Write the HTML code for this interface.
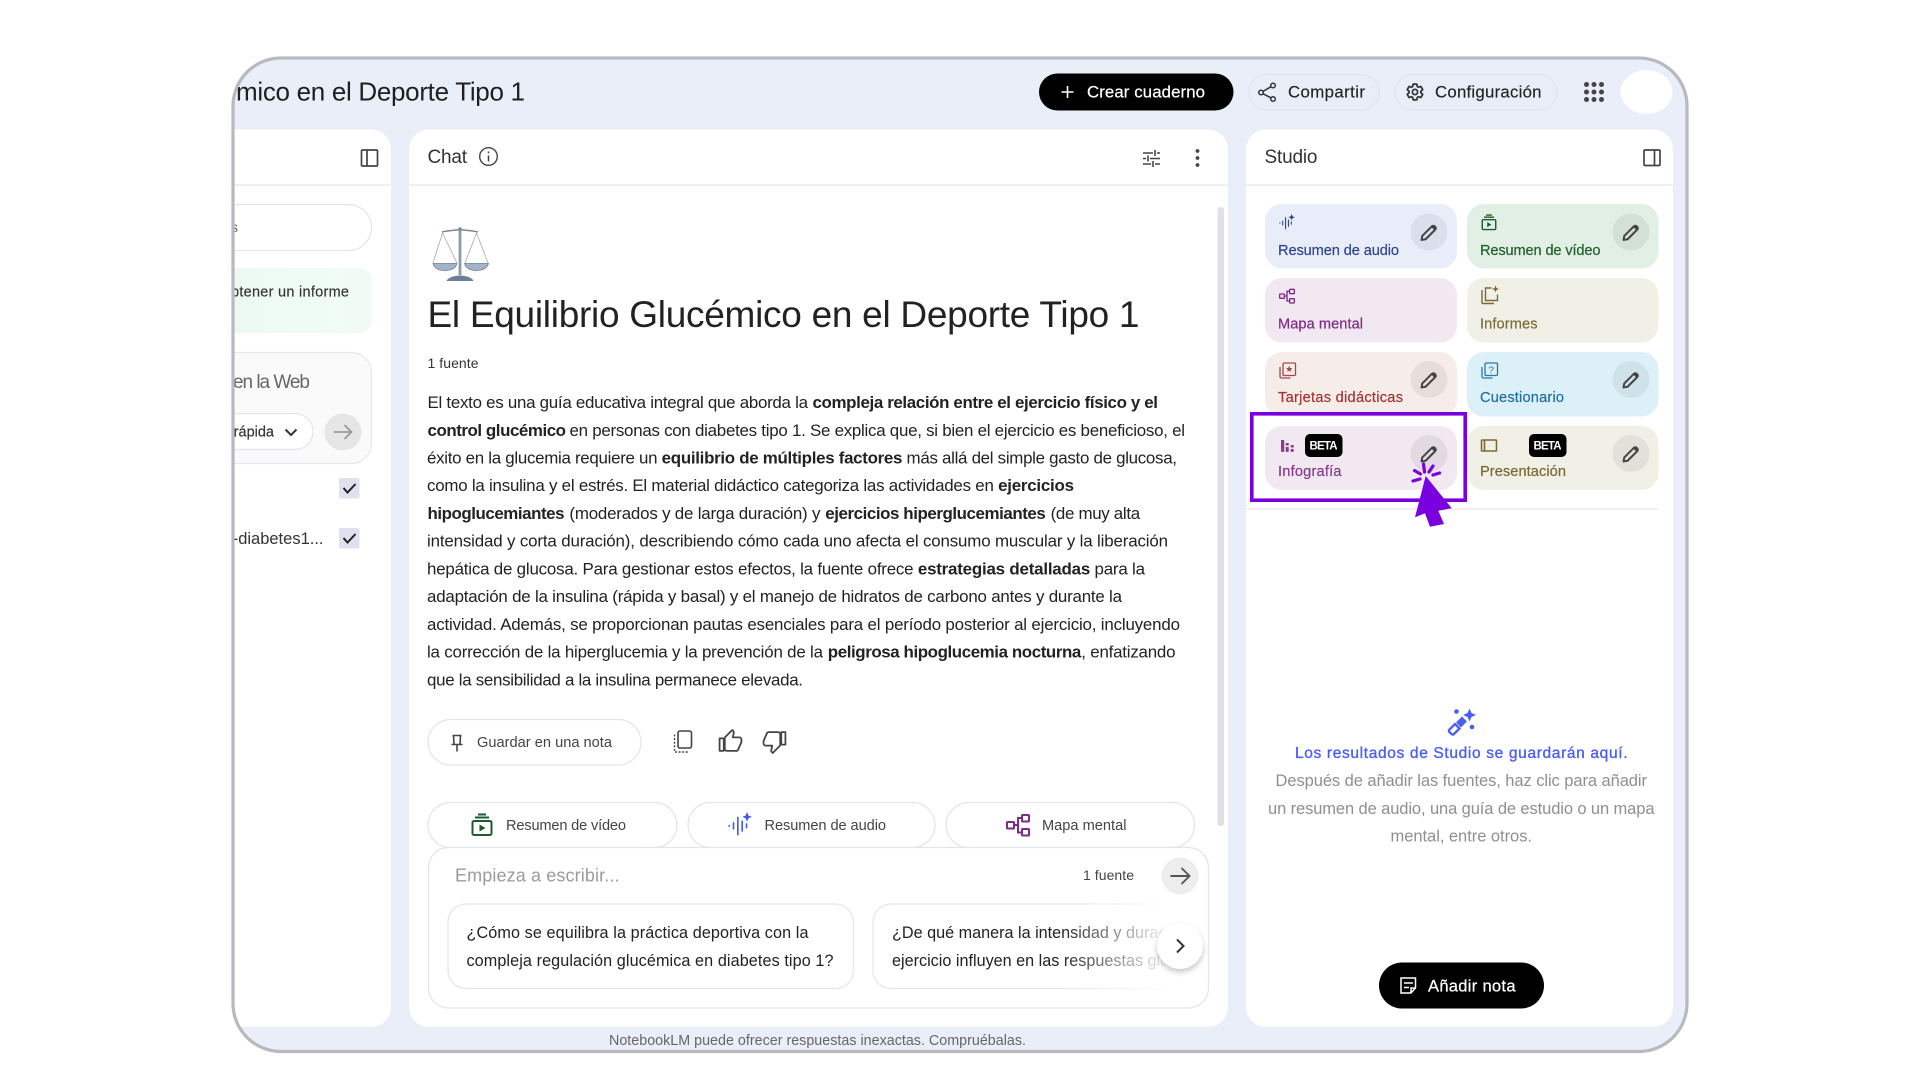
<!DOCTYPE html>
<html lang="es"><head><meta charset="utf-8"><title>NotebookLM</title>
<style>
html,body{margin:0;padding:0;background:#fff;width:1920px;height:1080px;overflow:hidden}
svg{display:block;position:absolute;left:0;top:0;filter:blur(.35px)}
text{font-family:"Liberation Sans",sans-serif;fill:currentColor;color:#1f1f1f;white-space:pre}
.m{stroke:currentColor;stroke-width:.3px}
.b{font-size:16.9px;color:#222}
.b tspan,.bb{font-weight:bold}
.c{font-size:14.6px}
</style></head><body>
<svg width="1920" height="1080" viewBox="0 0 1920 1080" xmlns="http://www.w3.org/2000/svg">
<defs>
<clipPath id="f"><rect x="233" y="58" width="1454" height="993.5" rx="48"/></clipPath>
<clipPath id="inp"><rect x="429" y="848" width="778" height="159" rx="20"/></clipPath>
<linearGradient id="fade"><stop offset="0" stop-color="#fff" stop-opacity="0"/><stop offset=".75" stop-color="#fff"/></linearGradient>
<linearGradient id="gr"><stop offset="0" stop-color="#e9f9ef"/><stop offset=".6" stop-color="#effcf4"/><stop offset="1" stop-color="#f0fbf6"/></linearGradient>
<symbol id="pen" viewBox="0 0 24 24" overflow="visible"><path d="M3.500 20.500l.8-4.600L15.300 4.900c.9-.9 2.300-.9 3.200 0l.6.6c.9.900.9 2.300 0 3.200L8.100 19.700z" fill="none" stroke="#444" stroke-width="2.300" stroke-linejoin="round"/><path d="M14.500 5.700l3-2.200 3 3-2.200 3z" fill="#444"/></symbol>
<symbol id="tup" viewBox="0 0 24 24"><path d="M9 21h9c.83 0 1.54-.5 1.840-1.220l3.020-7.050c.09-.23.14-.47.14-.73v-2c0-1.100-.9-2-2-2h-6.310l.95-4.570.03-.32c0-.41-.17-.79-.44-1.060L14.170 1 7.580 7.590C7.220 7.950 7 8.450 7 9v10c0 1.100.9 2 2 2zM2 9h4v12H2z" fill="none" stroke="#444" stroke-width="1.700" stroke-linejoin="round"/></symbol>
<symbol id="aud" viewBox="0 0 24 24"><g fill="none" stroke="currentColor" stroke-width="1.500" stroke-linecap="round"><path d="M2 12.500v.5M6 10v5.500M10 5v16M14 8.500v9M18 11v3.500"/></g><path d="M18.500 0l1.300 3.200L23 4.500l-3.200 1.300L18.500 9l-1.300-3.200L14 4.500l3.200-1.300z" fill="currentColor"/></symbol>
<symbol id="vid" viewBox="0 0 24 24"><g fill="none" stroke="currentColor" stroke-width="2"><rect x="2.500" y="8" width="19" height="14" rx="1.500"/><path d="M5 4.500h14M8 1.500h8"/></g><path d="M9.500 11.500l6 3.500-6 3.500z" fill="currentColor"/></symbol>
<symbol id="map" viewBox="0 0 24 24"><g fill="none" stroke="currentColor" stroke-width="2"><rect x="1" y="9" width="7" height="6.500" rx=".8"/><rect x="16" y="2" width="7" height="6.500" rx=".8"/><rect x="16" y="16" width="7" height="6.500" rx=".8"/><path d="M8 12h4M16 5h-4v14.500h4"/></g></symbol>
</defs>

<rect x="233" y="58" width="1454" height="993.500" rx="48" fill="#eaeef9"/>
<g clip-path="url(#f)">
<!-- header -->
<text x="236" y="100.500" font-size="26" textLength="289">mico en el Deporte Tipo 1</text>
<text x="236" y="100.500" font-size="26" text-anchor="end">El Equilibrio Glucé</text>

<!-- panels -->
<rect x="200" y="129.500" width="191" height="897.500" rx="20" fill="#fff"/>
<rect x="409" y="129.500" width="819" height="897.500" rx="20" fill="#fff"/>
<rect x="1246" y="129.500" width="427" height="897.500" rx="20" fill="#fff"/>
<path d="M233 185h158M409 185h819M1246 185h427" stroke="#e9ebf1" stroke-width="1.500"/>

<!-- left -->
<rect x="200" y="204.500" width="171.500" height="46" rx="23" fill="#fff" stroke="#e3e5ec" stroke-width="1.200"/>
<text x="238" y="232" font-size="14" text-anchor="end" style="color:#666">Buscar fuentes</text>
<rect x="200" y="268" width="172" height="65" rx="13" fill="url(#gr)"/>
<text x="231" y="296.500" font-size="14.500" textLength="118" class="m" style="color:#333;stroke-width:.15px">btener un informe</text>
<rect x="200" y="352.500" width="171.500" height="111" rx="20" fill="#fafafa" stroke="#e5e7ef" stroke-width="1.200"/>
<text x="233" y="388" font-size="19" textLength="77" style="color:#666">en la Web</text>
<rect x="190" y="413.500" width="123" height="36" rx="18" fill="#fff" stroke="#e3e5ec" stroke-width="1.200"/>
<text x="274" y="436.500" font-size="14.500" text-anchor="end" class="m" style="color:#333;stroke-width:.2px">Búsqueda rápida</text>
<path d="M285.500 429.500l5.500 5.500 5.500-5.500" fill="none" stroke="#333" stroke-width="2"/>
<circle cx="343" cy="432" r="18.500" fill="#e6e6e6"/>
<path d="M334 432h17.500M344.500 425l7 7-7 7" fill="none" stroke="#9a9a9a" stroke-width="1.800"/>
<rect x="339" y="478" width="20.500" height="20.500" rx="2" fill="#dfe2ee"/>
<path d="M343.500 488l4 4.500 8-8.500" fill="none" stroke="#222" stroke-width="2"/>
<rect x="339" y="528" width="20.500" height="20.500" rx="2" fill="#dfe2ee"/>
<path d="M343.500 538l4 4.500 8-8.500" fill="none" stroke="#222" stroke-width="2"/>
<text x="323.500" y="544" font-size="16.500" text-anchor="end" style="color:#333">ejercicio-diabetes1...</text>
<g fill="none" stroke="#444" stroke-width="1.700"><rect x="361.500" y="150" width="16" height="16" rx="1"/><path d="M367 150v16"/></g>

<!-- chat head -->
<text x="427.500" y="163" font-size="19" textLength="39.500" style="color:#333">Chat</text>
<circle cx="488.500" cy="156.500" r="8.800" fill="none" stroke="#444" stroke-width="1.400"/>
<path d="M488.500 155.500v6M488.500 151.500v1.800" stroke="#444" stroke-width="1.500"/>
<g stroke="#444" stroke-width="1.600" fill="none"><path d="M1143 153h10M1157 153h3M1155 150v6M1143 158.500h3M1150 158.500h10M1148 155.500v6M1143 164h8M1155 164h5M1153 161v6"/></g>
<g fill="#444"><circle cx="1197.500" cy="151" r="1.900"/><circle cx="1197.500" cy="158" r="1.900"/><circle cx="1197.500" cy="165" r="1.900"/></g>

<!-- scales emoji -->
<g fill="none">
<path d="M460 229v46" stroke="#8b9bad" stroke-width="2.800"/>
<path d="M442 232c6-1.500 12-1.500 18-2.500 6 1 12 1 18 2.500" stroke="#7c8794" stroke-width="1.500"/>
<path d="M442.500 233l-9.500 30M442.500 233l14.500 30M476.500 233l-11.500 30M476.500 233l11.500 30" stroke="#9a9ea4" stroke-width=".7"/>
<path d="M433 263.500h24c-1.500 5-6 7-12 7s-10.500-2-12-7zM464.500 263.500h24c-1.500 5-6 7-12 7s-10.500-2-12-7z" fill="#a3b4c6" stroke="#6a7b8f" stroke-width=".7"/>
<path d="M446.500 281c1-3 7-5.500 13.500-5.500s12.500 2.500 13.500 5.500z" fill="#6d7f94"/>
<circle cx="460" cy="229" r="1.800" fill="#7f8ea0"/>
</g>

<!-- chat content -->
<text x="427.500" y="327" font-size="37" textLength="712" style="color:#222">El Equilibrio Glucémico en el Deporte Tipo 1</text>
<text x="427.500" y="368" font-size="14" textLength="51" style="color:#333">1 fuente</text>
<text class="b" x="427.500" y="408" textLength="380.500">El texto es una guía educativa integral que aborda la</text>
<text class="b bb" x="812.500" y="408" textLength="345.500">compleja relación entre el ejercicio físico y el</text>
<text class="b bb" x="427.500" y="435.800" textLength="138.500">control glucémico</text>
<text class="b" x="569.500" y="435.800" textLength="615.500">en personas con diabetes tipo 1. Se explica que, si bien el ejercicio es beneficioso, el</text>
<text class="b" x="427" y="463.500" textLength="750">éxito en la glucemia requiere un <tspan>equilibrio de múltiples factores</tspan> más allá del simple gasto de glucosa,</text>
<text class="b" x="427" y="491.200" textLength="647">como la insulina y el estrés. El material didáctico categoriza las actividades en <tspan>ejercicios</tspan></text>
<text class="b bb" x="427.500" y="519" textLength="137">hipoglucemiantes</text>
<text class="b" x="569.400" y="519" textLength="251">(moderados y de larga duración) y</text>
<text class="b bb" x="825.300" y="519" textLength="220.500">ejercicios hiperglucemiantes</text>
<text class="b" x="1050.600" y="519" textLength="89.500">(de muy alta</text>
<text class="b" x="427" y="546.700" textLength="741">intensidad y corta duración), describiendo cómo cada uno afecta el consumo muscular y la liberación</text>
<text class="b" x="427" y="574.500" textLength="718">hepática de glucosa. Para gestionar estos efectos, la fuente ofrece <tspan>estrategias detalladas</tspan> para la</text>
<text class="b" x="427" y="602.200" textLength="695">adaptación de la insulina (rápida y basal) y el manejo de hidratos de carbono antes y durante la</text>
<text class="b" x="427" y="630" textLength="753">actividad. Además, se proporcionan pautas esenciales para el período posterior al ejercicio, incluyendo</text>
<text class="b" x="427" y="657.700" textLength="396">la corrección de la hiperglucemia y la prevención de la</text>
<text class="b bb" x="827.800" y="657.700" textLength="253.500">peligrosa hipoglucemia nocturna</text>
<text class="b" x="1081.300" y="657.700" textLength="94.200">, enfatizando</text>
<text class="b" x="427" y="685.500" textLength="376">que la sensibilidad a la insulina permanece elevada.</text>

<!-- scrollbar -->
<rect x="1217.500" y="207" width="6.500" height="619" rx="3.200" fill="#e0e1e6"/>

<!-- actions -->
<rect x="428" y="719.500" width="213" height="45.500" rx="22.700" fill="#fff" stroke="#e3e5ec" stroke-width="1.200"/>
<path d="M452.500 735.500h9M453.500 735.500l.5 9h6l.5-9M451.500 744.500h11M457 744.500v7" fill="none" stroke="#444" stroke-width="1.600"/>
<text x="477" y="747" class="c" textLength="135" style="color:#444">Guardar en una nota</text>
<rect x="678" y="731" width="13.500" height="17" rx="2" fill="none" stroke="#444" stroke-width="1.600"/>
<path d="M674.500 734.500v17.500h14" fill="none" stroke="#444" stroke-width="1.400" stroke-dasharray="2 1.600"/>
<use href="#tup" x="717.500" y="729" width="25" height="25"/>
<use href="#tup" x="0" y="0" width="25" height="25" transform="translate(787.500 754) rotate(180)"/>

<!-- chips -->
<g fill="#fff" stroke="#e3e5ec" stroke-width="1.200">
<rect x="428" y="802.500" width="249" height="45" rx="22.500"/>
<rect x="688" y="802.500" width="247" height="45" rx="22.500"/>
<rect x="946" y="802.500" width="248.500" height="45" rx="22.500"/>
</g>
<use href="#vid" x="470" y="813" width="24" height="24" style="color:#1e5b2e"/>
<text x="506" y="830" class="c" textLength="120" style="color:#444">Resumen de vídeo</text>
<use href="#aud" x="727" y="812" width="26" height="26" style="color:#3f5bf0"/>
<text x="764.500" y="830" class="c" textLength="121.500" style="color:#444">Resumen de audio</text>
<use href="#map" x="1006" y="813" width="24" height="24" style="color:#7f2a85"/>
<text x="1042" y="830" class="c" textLength="84.500" style="color:#444">Mapa mental</text>

<!-- input -->
<rect x="428.500" y="847.500" width="780" height="160.500" rx="20" fill="#fff" stroke="#e3e5ec" stroke-width="1.200"/>
<text x="455" y="881.500" font-size="18" textLength="164.500" style="color:#9b9b9b">Empieza a escribir...</text>
<text x="1083" y="880" font-size="14" textLength="51" style="color:#444">1 fuente</text>
<circle cx="1180" cy="876" r="18.500" fill="#ededed"/>
<path d="M1170.500 876h18.500M1181.500 868l8 8-8 8" fill="none" stroke="#555" stroke-width="1.900"/>
<rect x="448" y="904" width="405.500" height="84.500" rx="18" fill="#fff" stroke="#e3e5ec" stroke-width="1.200"/>
<text x="466.500" y="938" font-size="16.200" textLength="342" style="color:#222">¿Cómo se equilibra la práctica deportiva con la</text>
<text x="466.500" y="966" font-size="16.200" textLength="367" style="color:#222">compleja regulación glucémica en diabetes tipo 1?</text>
<g clip-path="url(#inp)">
<rect x="873" y="904" width="420" height="84.500" rx="18" fill="#fff" stroke="#e3e5ec" stroke-width="1.200"/>
<text x="892" y="938" font-size="16.200" style="color:#222">¿De qué manera la intensidad y duración del</text>
<text x="892" y="966" font-size="16.200" style="color:#222">ejercicio influyen en las respuestas glucémicas</text>
<rect x="1060" y="900" width="150" height="92" fill="url(#fade)"/>
</g>
<circle cx="1180" cy="949" r="23" fill="#000" opacity=".22" style="filter:blur(3px)"/>
<circle cx="1180" cy="946" r="23" fill="#fff"/>
<path d="M1177 939.500l6.500 6.500-6.500 6.500" fill="none" stroke="#333" stroke-width="2"/>

<text x="609" y="1045" font-size="14.300" textLength="417" style="color:#666">NotebookLM puede ofrecer respuestas inexactas. Compruébalas.</text>

<!-- top buttons -->
<rect x="1039" y="73.500" width="194.500" height="37" rx="18.500" fill="#000"/>
<path d="M1061.500 92h12M1067.500 86v12" stroke="#fff" stroke-width="1.600"/>
<text x="1087" y="97.500" font-size="16.800" class="m" textLength="118" style="color:#fff;stroke-width:.2px">Crear cuaderno</text>
<rect x="1249" y="74.500" width="130.500" height="35.500" rx="17.700" fill="#e9edf8" stroke="#dfe3ee" stroke-width="1.200"/>
<g fill="none" stroke="#333" stroke-width="1.500"><circle cx="1273" cy="85.500" r="2.300"/><circle cx="1261" cy="92.500" r="2.300"/><circle cx="1273" cy="99" r="2.300"/><path d="M1271 86.700l-8 4.700M1263 93.700l8 4.200"/></g>
<text x="1288" y="97.500" font-size="16.800" class="m" textLength="77" style="color:#222;stroke-width:.15px">Compartir</text>
<rect x="1395" y="74.500" width="162" height="35.500" rx="17.700" fill="#e9edf8" stroke="#dfe3ee" stroke-width="1.200"/>
<g transform="translate(1405.500 82.500) scale(.79)"><path d="M19.430 12.980c.04-.32.07-.64.07-.98s-.03-.66-.07-.98l2.110-1.650c.19-.15.24-.42.12-.64l-2-3.460c-.12-.22-.39-.3-.61-.22l-2.490 1c-.52-.4-1.080-.73-1.690-.98l-.38-2.650C14.460 2.180 14.250 2 14 2h-4c-.25 0-.46.18-.49.42l-.38 2.650c-.61.25-1.170.59-1.690.98l-2.490-1c-.23-.09-.49 0-.61.22l-2 3.460c-.13.22-.07.49.12.64l2.110 1.650c-.04.32-.07.65-.07.98s.03.66.07.98l-2.110 1.650c-.19.15-.24.42-.12.64l2 3.460c.12.22.39.3.61.22l2.490-1c.52.4 1.080.73 1.690.98l.38 2.650c.03.24.24.42.49.42h4c.25 0 .46-.18.49-.42l.38-2.650c.61-.25 1.170-.59 1.690-.98l2.490 1c.23.09.49 0 .61-.22l2-3.460c.12-.22.07-.49-.12-.64l-2.110-1.650z" fill="none" stroke="#333" stroke-width="2.200"/><circle cx="12" cy="12" r="3.300" fill="none" stroke="#333" stroke-width="2.200"/></g>
<text x="1435" y="97.500" font-size="16.800" class="m" textLength="106.500" style="color:#222;stroke-width:.15px">Configuración</text>
<g fill="#444"><circle cx="1586.500" cy="84.500" r="2.500"/><circle cx="1594" cy="84.500" r="2.500"/><circle cx="1601.500" cy="84.500" r="2.500"/><circle cx="1586.500" cy="92" r="2.500"/><circle cx="1594" cy="92" r="2.500"/><circle cx="1601.500" cy="92" r="2.500"/><circle cx="1586.500" cy="99.500" r="2.500"/><circle cx="1594" cy="99.500" r="2.500"/><circle cx="1601.500" cy="99.500" r="2.500"/></g>
<ellipse cx="1646.500" cy="92" rx="26" ry="22" fill="#fff"/>

<!-- studio -->
<text x="1264.500" y="163" font-size="19" textLength="53" style="color:#333">Studio</text>
<g fill="none" stroke="#444" stroke-width="1.700"><rect x="1644" y="150" width="16" height="15.500" rx="1"/><path d="M1654.500 150v15.500"/></g>

<rect x="1265" y="204" width="192" height="64.500" rx="17" fill="#e9edfa"/>
<rect x="1467" y="204" width="191.500" height="64.500" rx="17" fill="#e1efe4"/>
<rect x="1265" y="278" width="192" height="64.500" rx="17" fill="#f1e8f1"/>
<rect x="1467" y="278" width="191.500" height="64.500" rx="17" fill="#f0f0e7"/>
<rect x="1265" y="352" width="192" height="64.500" rx="17" fill="#f6ece9"/>
<rect x="1467" y="352" width="191.500" height="64.500" rx="17" fill="#dcf0f8"/>
<rect x="1265" y="426" width="192" height="64" rx="17" fill="#f1e8f1"/>
<rect x="1467" y="426" width="191.500" height="64" rx="17" fill="#f0f0e7"/>

<g fill="#000" fill-opacity=".06"><circle cx="1429" cy="232" r="18.500"/><circle cx="1631" cy="232" r="18.500"/><circle cx="1429" cy="379.500" r="18.500"/><circle cx="1631" cy="379.500" r="18.500"/><circle cx="1429" cy="453.500" r="18.500"/><circle cx="1631" cy="453.500" r="18.500"/></g>
<use href="#pen" x="1418.500" y="222" width="21" height="21"/>
<use href="#pen" x="1620.500" y="222" width="21" height="21"/>
<use href="#pen" x="1418.500" y="369.500" width="21" height="21"/>
<use href="#pen" x="1620.500" y="369.500" width="21" height="21"/>
<use href="#pen" x="1418.500" y="443.500" width="21" height="21"/>
<use href="#pen" x="1620.500" y="443.500" width="21" height="21"/>

<use href="#aud" x="1278.500" y="214" width="17" height="17" style="color:#24408f"/>
<use href="#vid" x="1480.500" y="214" width="17" height="17" style="color:#1e5b2e"/>
<use href="#map" x="1279" y="288" width="16" height="16" style="color:#7f2a85"/>
<g fill="none" stroke="#7a6a36" stroke-width="1.400"><path d="M1482 290v12.500a1 1 0 0 0 1 1h11"/><path d="M1491.500 288h-6v12.500h12v-6"/></g><path d="M1495.500 285.500l1 2.500 2.500 1-2.500 1-1 2.500-1-2.500-2.500-1 2.500-1z" fill="#7a6a36"/>
<g fill="none" stroke="#a5474a" stroke-width="1.300"><rect x="1283" y="363" width="12.500" height="12.500" rx="1.200"/><path d="M1280 367v9.500a1.500 1.500 0 0 0 1.500 1.500h9"/></g><path d="M1289.200 365.800l.9 2.100 2.200.2-1.600 1.500.5 2.200-2-1.200-2 1.200.5-2.200-1.600-1.500 2.200-.2z" fill="#a5474a"/>
<g fill="none" stroke="#2a7aa8" stroke-width="1.300"><rect x="1485" y="363" width="12.500" height="12.500" rx="1.200"/><path d="M1482 367v9.500a1.500 1.500 0 0 0 1.500 1.500h9"/></g><text x="1491.200" y="373.500" font-size="10" text-anchor="middle" style="color:#2a7aa8">?</text>
<g fill="#8a3a8a"><rect x="1281" y="440" width="3.200" height="11.800"/><rect x="1285.700" y="443" width="3" height="2.500"/><rect x="1285.700" y="447" width="3" height="4.800"/><rect x="1290.700" y="445" width="3" height="2.500"/><rect x="1290.700" y="449" width="3" height="2.800"/></g>
<g fill="none" stroke="#7a6a36" stroke-width="1.600"><rect x="1481.500" y="440" width="15" height="11" rx=".8"/><path d="M1484.500 440v11"/></g>

<text x="1278" y="255" class="c m" textLength="121" style="color:#2c4590;stroke-width:.2px">Resumen de audio</text>
<text x="1480" y="255" class="c m" textLength="120.500" style="color:#22602f;stroke-width:.2px">Resumen de vídeo</text>
<text x="1278" y="328.500" class="c m" textLength="85" style="color:#7f2a85;stroke-width:.2px">Mapa mental</text>
<text x="1480" y="328.500" class="c m" textLength="57.500" style="color:#7a6a36;stroke-width:.2px">Informes</text>
<text x="1278" y="402" class="c m" textLength="125" style="color:#a33431;stroke-width:.2px">Tarjetas didácticas</text>
<text x="1480" y="402" class="c m" textLength="84" style="color:#1f6f9f;stroke-width:.2px">Cuestionario</text>
<text x="1278" y="476" class="c m" textLength="63.500" style="color:#8a3a8a;stroke-width:.2px">Infografía</text>
<text x="1480" y="476" class="c m" textLength="86" style="color:#7a6a36;stroke-width:.2px">Presentación</text>
<rect x="1305" y="434" width="37.500" height="23" rx="5" fill="#000"/>
<text x="1309.500" y="449.500" font-size="11.500" font-weight="bold" textLength="28" style="color:#fff">BETA</text>
<rect x="1529" y="434" width="37.500" height="23" rx="5" fill="#000"/>
<text x="1533.500" y="449.500" font-size="11.500" font-weight="bold" textLength="28" style="color:#fff">BETA</text>
<path d="M1246 509h412" stroke="#e9ebf0" stroke-width="1.500"/>

<!-- studio empty -->
<g fill="#4a5ef5"><path d="M1449.500 729.500l5.500-5.500 4.500 4.500-5.500 5.500c-.8.800-1.800.800-2.500 0l-2-2c-.8-.7-.8-1.700 0-2.500z" fill="none" stroke="#4a5ef5" stroke-width="2.300"/><path d="M1456 722.500l6-6 5 5-6 6z"/><path d="M1469.500 708.500l2 4.500 4.500 2-4.500 2-2 4.500-2-4.500-4.500-2 4.500-2z"/><circle cx="1456.500" cy="711.500" r="2.300"/><circle cx="1472" cy="727" r="2.300"/></g>
<text x="1295" y="758" font-size="15.500" class="m" textLength="332.500" style="color:#4a5ef5;stroke-width:.35px">Los resultados de Studio se guardarán aquí.</text>
<text x="1275.500" y="786" font-size="16.500" textLength="371.500" style="color:#8f8f8f">Después de añadir las fuentes, haz clic para añadir</text>
<text x="1268" y="814" font-size="16.500" textLength="386.500" style="color:#8f8f8f">un resumen de audio, una guía de estudio o un mapa</text>
<text x="1390.500" y="841.500" font-size="16.500" textLength="141.500" style="color:#8f8f8f">mental, entre otros.</text>
<rect x="1379" y="962.500" width="165" height="46" rx="23" fill="#000"/>
<path d="M1401 978h14.500v10l-4.500 5h-10zM1404 983h9M1404 987.500h5M1411 993v-5h4.500" fill="none" stroke="#fff" stroke-width="1.500"/>
<text x="1428" y="991.500" font-size="16.500" class="m" textLength="87.500" style="color:#fff;stroke-width:.25px">Añadir nota</text>
</g>

<!-- frame -->
<rect x="233" y="58" width="1454" height="993.500" rx="48" fill="none" stroke="#b9b8c0" stroke-width="3.200"/>

<!-- highlight -->
<rect x="1251.800" y="413.800" width="213.400" height="86.400" fill="none" stroke="#7b00e0" stroke-width="3.600"/>
<g stroke="#7b00e0" stroke-width="3.200" stroke-linecap="round" fill="none">
<path d="M1414.500 470.500l6 3.500M1413 481l7-2M1423.500 464l1 8M1433 466l-4 6M1439.500 473l-6.500 2"/>
</g>
<path d="M1425.700 476L1451.700 508.300 1438.300 510.700 1444 524 1430 526.700 1425 513.300 1415 517.300z" fill="#7b00e0"/>
</svg>
</body></html>
